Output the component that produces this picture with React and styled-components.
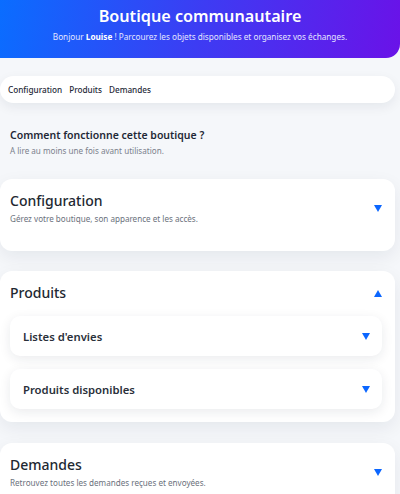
import React from 'react';
import styled, { createGlobalStyle } from 'styled-components';

const Global = createGlobalStyle`
  html, body {
    margin: 0;
    padding: 0;
    background: #f5f7fa;
    font-family: "Noto Sans", "Open Sans", sans-serif;
    color: #222831;
    overflow: hidden;
  }
`;

const Page = styled.div`
  width: 400px;
  height: 494px;
  overflow: hidden;
`;

const Header = styled.header`
  height: 58px;
  box-sizing: border-box;
  padding-top: 5px;
  background: linear-gradient(100deg, #0a6dff 0%, #3d3cf3 50%, #6a12e8 100%);
  border-bottom-right-radius: 14px;
  color: #fff;
  text-align: center;
`;

const Title = styled.h1`
  margin: 0;
  font-size: 16.2px;
  font-weight: 600;
  line-height: 22px;
`;

const Greeting = styled.p`
  margin: 4px 0 0;
  font-size: 8.2px;
  line-height: 12px;
  color: #e4e6ff;

  b {
    color: #fff;
    font-weight: 700;
  }
`;

const Main = styled.main`
  padding: 18px 5px 0 0;
  display: flex;
  flex-direction: column;
`;

const Nav = styled.nav`
  height: 27px;
  display: flex;
  align-items: center;
  gap: 7px;
  padding: 0 8px;
  background: #fff;
  border-radius: 14px;
  box-shadow: 0 4px 12px rgba(20, 30, 60, 0.07);
`;

const NavLink = styled.span`
  font-size: 8.2px;
  font-weight: 500;
  color: #1f2937;
`;

const Intro = styled.section`
  padding: 24px 10px 0;
`;

const IntroTitle = styled.h2`
  margin: 0;
  font-size: 10.5px;
  font-weight: 600;
  line-height: 16px;
  color: #1f2937;
`;

const Hint = styled.p`
  margin: 2px 0 0;
  font-size: 8.1px;
  line-height: 12px;
  color: #7b818c;
`;

const Card = styled.section`
  margin-top: ${p => p.$top}px;
  background: #fff;
  border-radius: 12px;
  box-shadow: 0 6px 18px rgba(20, 30, 60, 0.07);
  padding: ${p => p.$pad};
`;

const CardHead = styled.div`
  display: flex;
  align-items: center;
  justify-content: space-between;
`;

const CardTitle = styled.h3`
  margin: 0;
  font-size: 14px;
  font-weight: 500;
  line-height: 20px;
  color: #222831;
`;

const CardText = styled.p`
  margin: 2px 0 0;
  font-size: 8.1px;
  line-height: 12px;
  color: #6b717c;
`;

const Arrow = styled.span`
  width: 0;
  height: 0;
  border-left: 4.5px solid transparent;
  border-right: 4.5px solid transparent;
  ${p => p.$up
    ? 'border-bottom: 7px solid #0b66ff;'
    : 'border-top: 7px solid #0b66ff;'}
  margin-right: ${p => p.$mr}px;
`;

const SubList = styled.div`
  display: flex;
  flex-direction: column;
  gap: 13px;
  margin-top: 13px;
  padding-right: 13px;
`;

const SubCard = styled.div`
  height: 40px;
  display: flex;
  align-items: center;
  justify-content: space-between;
  padding: 0 12px 0 13px;
  background: #fff;
  border-radius: 10px;
  box-shadow: 0 3px 12px rgba(20, 30, 60, 0.09);
`;

const SubTitle = styled.span`
  font-size: 11.3px;
  font-weight: 600;
  color: #2a303a;
`;

export default function App() {
  return (
    <Page>
      <Global />
      <Header>
        <Title>Boutique communautaire</Title>
        <Greeting>
          Bonjour <b>Louise</b> ! Parcourez les objets disponibles et organisez vos échanges.
        </Greeting>
      </Header>
      <Main>
        <Nav>
          <NavLink>Configuration</NavLink>
          <NavLink>Produits</NavLink>
          <NavLink>Demandes</NavLink>
        </Nav>

        <Intro>
          <IntroTitle>Comment fonctionne cette boutique ?</IntroTitle>
          <Hint>A lire au moins une fois avant utilisation.</Hint>
        </Intro>

        <Card $top={22} $pad="12px 0 26px 10px">
          <CardHead>
            <div>
              <CardTitle>Configuration</CardTitle>
              <CardText>Gérez votre boutique, son apparence et les accès.</CardText>
            </div>
            <Arrow $mr={13} />
          </CardHead>
        </Card>

        <Card $top={20} $pad="12px 0 13px 10px">
          <CardHead>
            <CardTitle>Produits</CardTitle>
            <Arrow $up $mr={13} />
          </CardHead>
          <SubList>
            <SubCard>
              <SubTitle>Listes d'envies</SubTitle>
              <Arrow $mr={0} />
            </SubCard>
            <SubCard>
              <SubTitle>Produits disponibles</SubTitle>
              <Arrow $mr={0} />
            </SubCard>
          </SubList>
        </Card>

        <Card $top={21} $pad="12px 0 27px 10px">
          <CardHead>
            <div>
              <CardTitle>Demandes</CardTitle>
              <CardText>Retrouvez toutes les demandes reçues et envoyées.</CardText>
            </div>
            <Arrow $mr={13} />
          </CardHead>
        </Card>
      </Main>
    </Page>
  );
}
